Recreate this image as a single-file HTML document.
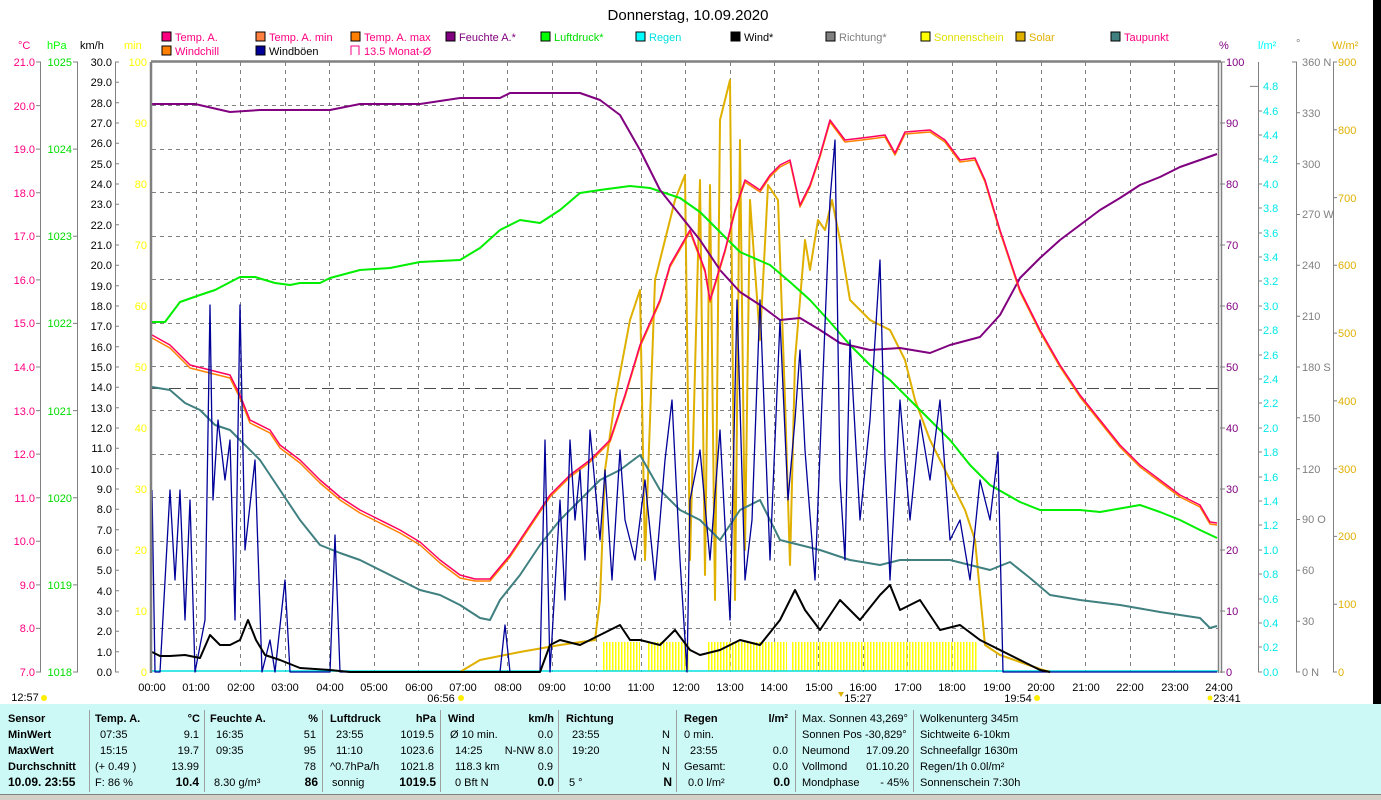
<!DOCTYPE html>
<html><head><meta charset="utf-8"><style>
body{margin:0;background:#fff;width:1381px;height:800px;overflow:hidden}
svg{display:block;font-family:"Liberation Sans",sans-serif}
</style></head><body>
<svg width="1381" height="800" viewBox="0 0 1381 800" xmlns="http://www.w3.org/2000/svg">
<defs>
<pattern id="sun" x="0" y="0" width="3" height="40" patternUnits="userSpaceOnUse"><rect x="0" y="0" width="1.5" height="40" fill="#ffff00"/></pattern>
</defs>
<rect x="1373" y="0" width="8" height="704" fill="#000"/>
<text x="688" y="20" font-size="15" text-anchor="middle">Donnerstag, 10.09.2020</text>
<!-- legend -->
<g font-size="11">
<rect x="162" y="32" width="9" height="9" fill="#ff0080" stroke="#000"/><text x="175" y="41" fill="#ff0080">Temp. A.</text>
<rect x="256" y="32" width="9" height="9" fill="#ff8040" stroke="#000"/><text x="269" y="41" fill="#ff0080">Temp. A. min</text>
<rect x="351" y="32" width="9" height="9" fill="#ff8000" stroke="#000"/><text x="364" y="41" fill="#ff0080">Temp. A. max</text>
<rect x="446" y="32" width="9" height="9" fill="#800080" stroke="#000"/><text x="459" y="41" fill="#800080">Feuchte A.*</text>
<rect x="541" y="32" width="9" height="9" fill="#00ff00" stroke="#000"/><text x="554" y="41" fill="#00dd00">Luftdruck*</text>
<rect x="636" y="32" width="9" height="9" fill="#00ffff" stroke="#000"/><text x="649" y="41" fill="#00e0e0">Regen</text>
<rect x="731" y="32" width="9" height="9" fill="#000" stroke="#000"/><text x="744" y="41">Wind*</text>
<rect x="826" y="32" width="9" height="9" fill="#808080" stroke="#000"/><text x="839" y="41" fill="#808080">Richtung*</text>
<rect x="921" y="32" width="9" height="9" fill="#ffff00" stroke="#000"/><text x="934" y="41" fill="#e0e000">Sonnenschein</text>
<rect x="1016" y="32" width="9" height="9" fill="#e0b000" stroke="#000"/><text x="1029" y="41" fill="#e0b000">Solar</text>
<rect x="1111" y="32" width="9" height="9" fill="#408080" stroke="#000"/><text x="1124" y="41" fill="#ff0080">Taupunkt</text>
<rect x="162" y="46" width="9" height="9" fill="#ff8000" stroke="#000"/><text x="175" y="55" fill="#ff0080">Windchill</text>
<rect x="256" y="46" width="9" height="9" fill="#000099" stroke="#000"/><text x="269" y="55">Windböen</text>
<path d="M351 55V46h8v9" fill="none" stroke="#ff0080"/><text x="364" y="55" fill="#ff0080">13.5 Monat-Ø</text>
</g>
<!-- axis units -->
<g font-size="11">
<text x="18" y="49" fill="#ff0080">°C</text><text x="47" y="49" fill="#00ff00">hPa</text><text x="80" y="49">km/h</text><text x="124" y="49" fill="#ffff00">min</text>
<text x="1219" y="49" fill="#800080">%</text><text x="1258" y="49" fill="#00ffff">l/m²</text><text x="1296" y="47" fill="#808080">°</text><text x="1332" y="49" fill="#e0b000">W/m²</text>
</g>
<!-- axis lines -->
<g stroke="#808080" stroke-width="1" fill="none">
<path d="M40.5 62V672M77.5 62V672M115.5 62V672M1258.5 62V672M1296.5 62V672M1333.5 62V672"/>
<path d="M36 62h5M36 105.6h5M36 149.1h5M36 192.7h5M36 236.3h5M36 279.9h5M36 323.4h5M36 367h5M36 410.6h5M36 454.1h5M36 497.7h5M36 541.3h5M36 584.9h5M36 628.4h5M36 672h5"/>
<path d="M73 62h5M73 149.1h5M73 236.3h5M73 323.4h5M73 410.6h5M73 497.7h5M73 584.9h5M73 672h5"/>
<path d="M115 62h4M115 82.3h4M115 102.7h4M115 123h4M115 143.3h4M115 163.7h4M115 184h4M115 204.3h4M115 224.7h4M115 245h4M115 265.3h4M115 285.7h4M115 306h4M115 326.3h4M115 346.7h4M115 367h4M115 387.3h4M115 407.7h4M115 428h4M115 448.3h4M115 468.7h4M115 489h4M115 509.3h4M115 529.7h4M115 550h4M115 570.3h4M115 590.7h4M115 611h4M115 631.3h4M115 651.7h4M115 672h4"/>
<path d="M1220 62h5M1220 123h5M1220 184h5M1220 245h5M1220 306h5M1220 367h5M1220 428h5M1220 489h5M1220 550h5M1220 611h5M1220 672h5"/>
<path d="M1250 86.4h8M1258 111h4M1258 135h4M1258 159h4M1258 184h4M1258 208h4M1258 233h4M1258 257h4M1258 281h4M1258 306h4M1258 330h4M1258 355h4M1258 379h4M1258 403h4M1258 428h4M1258 452h4M1258 477h4M1258 501h4M1258 525h4M1258 550h4M1258 574h4M1258 599h4M1258 623h4M1258 647h4M1258 672h4"/>
<path d="M1292 62h5M1296 112.8h4M1296 163.7h4M1296 214.5h4M1296 265.3h4M1296 316.2h4M1296 367h4M1296 417.8h4M1296 468.7h4M1296 519.5h4M1296 570.3h4M1296 621.2h4M1296 672h4"/>
<path d="M1333 62h4M1333 129.8h4M1333 197.6h4M1333 265.3h4M1333 333.1h4M1333 400.9h4M1333 468.7h4M1333 536.4h4M1333 604.2h4M1333 672h4"/>
</g>
<!-- left labels -->
<g font-size="11" text-anchor="end" fill="#ff0080">
<text x="35" y="66">21.0</text><text x="35" y="110">20.0</text><text x="35" y="153">19.0</text><text x="35" y="197">18.0</text><text x="35" y="240">17.0</text><text x="35" y="284">16.0</text><text x="35" y="327">15.0</text><text x="35" y="371">14.0</text><text x="35" y="415">13.0</text><text x="35" y="458">12.0</text><text x="35" y="502">11.0</text><text x="35" y="545">10.0</text><text x="35" y="589">9.0</text><text x="35" y="632">8.0</text><text x="35" y="676">7.0</text>
</g>
<g font-size="11" text-anchor="end" fill="#00dd00">
<text x="72" y="66">1025</text><text x="72" y="153">1024</text><text x="72" y="240">1023</text><text x="72" y="327">1022</text><text x="72" y="415">1021</text><text x="72" y="502">1020</text><text x="72" y="589">1019</text><text x="72" y="676">1018</text>
</g>
<g font-size="11" text-anchor="end">
<text x="112" y="66">30.0</text><text x="112" y="86">29.0</text><text x="112" y="107">28.0</text><text x="112" y="127">27.0</text><text x="112" y="147">26.0</text><text x="112" y="168">25.0</text><text x="112" y="188">24.0</text><text x="112" y="208">23.0</text><text x="112" y="229">22.0</text><text x="112" y="249">21.0</text><text x="112" y="269">20.0</text><text x="112" y="290">19.0</text><text x="112" y="310">18.0</text><text x="112" y="330">17.0</text><text x="112" y="351">16.0</text><text x="112" y="371">15.0</text><text x="112" y="391">14.0</text><text x="112" y="412">13.0</text><text x="112" y="432">12.0</text><text x="112" y="452">11.0</text><text x="112" y="473">10.0</text><text x="112" y="493">9.0</text><text x="112" y="513">8.0</text><text x="112" y="534">7.0</text><text x="112" y="554">6.0</text><text x="112" y="574">5.0</text><text x="112" y="595">4.0</text><text x="112" y="615">3.0</text><text x="112" y="635">2.0</text><text x="112" y="656">1.0</text><text x="112" y="676">0.0</text>
</g>
<g font-size="11" text-anchor="end" fill="#ffff00">
<text x="147" y="66">100</text><text x="147" y="127">90</text><text x="147" y="188">80</text><text x="147" y="249">70</text><text x="147" y="310">60</text><text x="147" y="371">50</text><text x="147" y="432">40</text><text x="147" y="493">30</text><text x="147" y="554">20</text><text x="147" y="615">10</text><text x="147" y="676">0</text>
</g>
<!-- right labels -->
<g font-size="11" fill="#800080">
<text x="1226" y="66">100</text><text x="1226" y="127">90</text><text x="1226" y="188">80</text><text x="1226" y="249">70</text><text x="1226" y="310">60</text><text x="1226" y="371">50</text><text x="1226" y="432">40</text><text x="1226" y="493">30</text><text x="1226" y="554">20</text><text x="1226" y="615">10</text><text x="1226" y="676">0</text>
</g>
<g font-size="11" fill="#00e8e8">
<text x="1263" y="90">4.8</text><text x="1263" y="115">4.6</text><text x="1263" y="139">4.4</text><text x="1263" y="163">4.2</text><text x="1263" y="188">4.0</text><text x="1263" y="212">3.8</text><text x="1263" y="237">3.6</text><text x="1263" y="261">3.4</text><text x="1263" y="285">3.2</text><text x="1263" y="310">3.0</text><text x="1263" y="334">2.8</text><text x="1263" y="359">2.6</text><text x="1263" y="383">2.4</text><text x="1263" y="407">2.2</text><text x="1263" y="432">2.0</text><text x="1263" y="456">1.8</text><text x="1263" y="481">1.6</text><text x="1263" y="505">1.4</text><text x="1263" y="529">1.2</text><text x="1263" y="554">1.0</text><text x="1263" y="578">0.8</text><text x="1263" y="603">0.6</text><text x="1263" y="627">0.4</text><text x="1263" y="651">0.2</text><text x="1263" y="676">0.0</text>
</g>
<g font-size="11" fill="#808080">
<text x="1302" y="66">360 N</text><text x="1302" y="117">330</text><text x="1302" y="168">300</text><text x="1302" y="218">270 W</text><text x="1302" y="269">240</text><text x="1302" y="320">210</text><text x="1302" y="371">180 S</text><text x="1302" y="422">150</text><text x="1302" y="473">120</text><text x="1302" y="523">90 O</text><text x="1302" y="574">60</text><text x="1302" y="625">30</text><text x="1302" y="676">0 N</text>
</g>
<g font-size="11" fill="#e0b000">
<text x="1338" y="66">900</text><text x="1338" y="134">800</text><text x="1338" y="202">700</text><text x="1338" y="269">600</text><text x="1338" y="337">500</text><text x="1338" y="405">400</text><text x="1338" y="473">300</text><text x="1338" y="540">200</text><text x="1338" y="608">100</text><text x="1338" y="676">0</text>
</g>
<!-- grid -->
<g stroke="#808080" stroke-dasharray="4,4" stroke-width="1">
<path d="M152 105.5H1218M152 149.5H1218M152 192.5H1218M152 236.5H1218M152 279.5H1218M152 323.5H1218M152 366.5H1218M152 410.5H1218M152 454.5H1218M152 497.5H1218M152 541.5H1218M152 584.5H1218M152 628.5H1218"/>
<path d="M196.5 62V672M240.5 62V672M285.5 62V672M329.5 62V672M374.5 62V672M418.5 62V672M463.5 62V672M507.5 62V672M552.5 62V672M596.5 62V672M641.5 62V672M685.5 62V672M730.5 62V672M774.5 62V672M818.5 62V672M863.5 62V672M907.5 62V672M952.5 62V672M996.5 62V672M1041.5 62V672M1085.5 62V672M1130.5 62V672M1174.5 62V672"/>
</g>
<path d="M152 388.5H1218" stroke="#000" stroke-dasharray="12,5" stroke-width="1" opacity=".7"/>
<!-- sunshine -->
<g fill="url(#sun)"><rect x="603" y="642" width="37" height="29"/><rect x="648" y="642" width="42" height="29"/><rect x="708" y="642" width="79" height="29"/><rect x="792" y="642" width="186" height="29"/></g>
<path d="M152 671H1218" stroke="#00e0e0" stroke-width="1.5"/>
<g fill="none" stroke-width="2" stroke-linejoin="round">
<polyline stroke="#e0b000" points="460,672 480,660 520,652 560,645 595,640 600,600 605,470 615,400 630,320 640,290 645,560 655,280 665,240 675,200 685,175 690,560 700,180 705,575 710,185 715,600 720,120 730,80 735,600 740,140 745,550 750,200 760,340 768,185 778,200 785,400 790,565 795,360 805,240 810,270 818,220 825,230 832,200 840,240 850,300 870,320 890,330 905,360 915,400 930,440 950,480 965,510 975,540 985,645 1000,655 1020,662 1040,669 1050,672"/>
<polyline stroke="#408080" points="152,387 170,390 185,403 200,410 215,425 230,430 240,440 260,460 280,490 300,520 320,545 340,553 360,560 380,570 400,580 420,590 440,595 460,605 480,618 490,620 500,600 520,575 540,545 560,520 580,500 600,480 620,470 640,455 660,490 680,510 700,520 720,540 740,510 760,500 780,540 800,545 820,550 850,560 880,565 900,560 930,560 950,560 970,565 990,570 1010,562 1030,578 1050,595 1080,600 1120,605 1160,612 1200,618 1210,628 1217,626"/>
<polyline stroke="#00ee00" points="152,322 165,322 180,302 200,295 215,290 240,277 255,277 275,283 290,285 300,283 320,283 330,278 360,270 390,268 420,262 460,260 480,248 500,230 520,220 540,223 560,210 580,193 600,190 630,186 650,188 680,198 700,212 720,232 740,252 770,265 790,282 810,300 830,322 850,345 870,365 890,380 910,400 930,420 950,440 970,465 990,485 1020,502 1040,510 1080,510 1100,512 1140,505 1160,512 1180,520 1200,530 1217,538"/>
<polyline stroke="#800080" points="152,104 195,104 230,112 260,110 330,110 360,104 420,104 460,98 500,98 510,93 580,93 600,100 620,115 640,150 660,190 680,215 700,240 720,270 740,292 760,305 780,320 800,318 820,330 840,343 870,350 900,348 930,353 950,345 980,337 1000,315 1020,278 1040,258 1060,240 1080,225 1100,210 1120,198 1140,185 1160,177 1180,167 1200,160 1217,154"/>
<polyline stroke="#ff8000" stroke-width="1.5" points="152,338 170,348 190,368 210,373 230,378 240,398 250,423 270,433 280,448 300,463 320,483 340,500 360,513 380,523 400,533 420,545 440,563 460,578 475,581 490,581 510,557 530,527 550,497 570,477 590,462 610,442 625,397 640,347 660,302 670,267 690,232 705,272 710,302 725,252 735,212 745,182 760,192 770,177 780,167 790,162 800,207 810,187 820,157 830,122 845,142 870,139 885,137 895,155 905,134 930,132 945,142 960,162 975,160 985,182 1000,232 1020,292 1040,332 1060,367 1080,397 1100,422 1120,447 1140,467 1160,482 1180,497 1200,507 1210,524 1217,525"/>
<polyline stroke="#ff0060" stroke-width="1.5" points="152,335 170,345 190,365 210,370 230,375 240,395 250,420 270,430 280,445 300,460 320,480 340,497 360,510 380,520 400,530 420,542 440,560 460,575 475,579 490,579 510,555 530,525 550,495 570,475 590,460 610,440 625,395 640,345 660,300 670,265 690,230 705,270 710,300 725,250 735,210 745,180 760,190 770,175 780,165 790,160 800,205 810,185 820,155 830,120 845,140 870,137 885,135 895,153 905,132 930,130 945,140 960,160 975,158 985,180 1000,230 1020,290 1040,330 1060,365 1080,395 1100,420 1120,445 1140,465 1160,480 1180,495 1200,505 1210,522 1217,523"/>
<polyline stroke="#000099" stroke-width="1.3" points="152,490 155,672 160,672 170,490 175,580 180,490 185,620 190,500 195,672 205,620 210,305 213,500 218,420 225,480 230,440 235,620 240,305 245,550 255,460 262,672 270,640 275,672 285,580 290,672 330,672 335,535 340,672 500,672 505,625 510,672 540,672 545,440 550,672 560,500 565,600 570,440 575,520 580,470 585,560 590,430 600,540 605,470 612,580 620,450 625,520 635,560 645,480 655,580 665,460 672,400 680,560 687,672 690,500 700,450 710,560 720,430 730,620 737,300 745,580 752,520 760,300 770,560 780,320 788,500 795,420 800,350 805,450 815,580 822,400 830,200 835,140 840,480 845,560 850,340 860,520 870,420 880,260 885,460 890,580 900,400 910,520 920,420 930,480 940,400 950,540 960,520 970,580 980,480 990,520 998,452 1003,672 1217,672"/>
<polyline stroke="#000" points="152,652 160,656 170,656 185,655 200,658 210,635 220,645 230,645 240,640 248,620 256,640 265,655 280,660 300,668 330,670 350,672 540,672 550,645 560,640 580,645 600,635 620,625 630,640 640,640 660,645 675,630 690,650 700,655 720,650 740,640 760,645 780,620 795,590 805,610 820,630 840,600 860,620 880,595 890,585 900,610 920,600 940,630 960,625 980,640 1000,650 1020,660 1040,670 1050,672"/>
</g>
<!-- frame -->
<path d="M151 61.5H1221M151 62V673" stroke="#808080" stroke-width="2.5" fill="none"/>
<path d="M1218.5 62V673M1221.5 62V673" stroke="#808080" stroke-width="1.5" fill="none"/>
<!-- x labels -->
<g font-size="11" text-anchor="middle">
<text x="152" y="691">00:00</text><text x="196" y="691">01:00</text><text x="241" y="691">02:00</text><text x="285" y="691">03:00</text><text x="330" y="691">04:00</text><text x="374" y="691">05:00</text><text x="419" y="691">06:00</text><text x="463" y="691">07:00</text><text x="508" y="691">08:00</text><text x="552" y="691">09:00</text><text x="597" y="691">10:00</text><text x="641" y="691">11:00</text><text x="686" y="691">12:00</text><text x="730" y="691">13:00</text><text x="774" y="691">14:00</text><text x="819" y="691">15:00</text><text x="863" y="691">16:00</text><text x="908" y="691">17:00</text><text x="952" y="691">18:00</text><text x="997" y="691">19:00</text><text x="1041" y="691">20:00</text><text x="1086" y="691">21:00</text><text x="1130" y="691">22:00</text><text x="1175" y="691">23:00</text><text x="1219" y="691">24:00</text>
<text x="25" y="701">12:57</text><text x="441" y="702">06:56</text><text x="858" y="702">15:27</text><text x="1018" y="702">19:54</text><text x="1227" y="702">23:41</text>
</g>
<g fill="#ffee00"><circle cx="44" cy="698" r="3"/><circle cx="461" cy="698" r="3"/><circle cx="1037" cy="698" r="3"/><circle cx="1210" cy="698" r="2.5"/></g>
<path d="M838 692l3 5 3-5z" fill="#e0b000"/>
<!-- bottom table -->
<rect x="0" y="704" width="1381" height="90" fill="#ccf8f6"/>
<rect x="0" y="794" width="1381" height="6" fill="#d4d0c8"/>
<path d="M0 794.5H1381" stroke="#808080"/>
<g stroke="#a0a0a0"><path d="M89.5 710V792M204.5 710V792M322.5 710V792M440.5 710V792M558.5 710V792M676.5 710V792M795.5 710V792M913.5 710V792"/></g>
<g font-size="11">
<g font-weight="bold"><text x="8" y="722">Sensor</text><text x="8" y="738">MinWert</text><text x="8" y="754">MaxWert</text><text x="8" y="770">Durchschnitt</text><text x="8" y="786" font-size="12">10.09. 23:55</text>
<text x="95" y="722">Temp. A.</text><text x="200" y="722" text-anchor="end">°C</text>
<text x="210" y="722">Feuchte A.</text><text x="318" y="722" text-anchor="end">%</text>
<text x="330" y="722">Luftdruck</text><text x="436" y="722" text-anchor="end">hPa</text>
<text x="448" y="722">Wind</text><text x="554" y="722" text-anchor="end">km/h</text>
<text x="566" y="722">Richtung</text>
<text x="684" y="722">Regen</text><text x="788" y="722" text-anchor="end">l/m²</text>
<text x="199" y="786" text-anchor="end" font-size="12">10.4</text><text x="318" y="786" text-anchor="end" font-size="12">86</text><text x="436" y="786" text-anchor="end" font-size="12">1019.5</text><text x="554" y="786" text-anchor="end" font-size="12">0.0</text><text x="672" y="786" text-anchor="end" font-size="12">N</text><text x="790" y="786" text-anchor="end" font-size="12">0.0</text>
</g>
<text x="100" y="738">07:35</text><text x="199" y="738" text-anchor="end">9.1</text>
<text x="100" y="754">15:15</text><text x="199" y="754" text-anchor="end">19.7</text>
<text x="95" y="770">(+ 0.49 )</text><text x="199" y="770" text-anchor="end">13.99</text>
<text x="95" y="786">F: 86 %</text>
<text x="216" y="738">16:35</text><text x="316" y="738" text-anchor="end">51</text>
<text x="216" y="754">09:35</text><text x="316" y="754" text-anchor="end">95</text>
<text x="316" y="770" text-anchor="end">78</text>
<text x="214" y="786">8.30 g/m³</text>
<text x="336" y="738">23:55</text><text x="434" y="738" text-anchor="end">1019.5</text>
<text x="336" y="754">11:10</text><text x="434" y="754" text-anchor="end">1023.6</text>
<text x="330" y="770">^0.7hPa/h</text><text x="434" y="770" text-anchor="end">1021.8</text>
<text x="332" y="786">sonnig</text>
<text x="450" y="738">Ø 10 min.</text><text x="553" y="738" text-anchor="end">0.0</text>
<text x="455" y="754">14:25</text><text x="553" y="754" text-anchor="end">N-NW 8.0</text>
<text x="455" y="770">118.3 km</text><text x="553" y="770" text-anchor="end">0.9</text>
<text x="455" y="786">0 Bft N</text>
<text x="572" y="738">23:55</text><text x="670" y="738" text-anchor="end">N</text>
<text x="572" y="754">19:20</text><text x="670" y="754" text-anchor="end">N</text>
<text x="670" y="770" text-anchor="end">N</text>
<text x="569" y="786">5 °</text>
<text x="684" y="738">0 min.</text>
<text x="690" y="754">23:55</text><text x="788" y="754" text-anchor="end">0.0</text>
<text x="684" y="770">Gesamt:</text><text x="788" y="770" text-anchor="end">0.0</text>
<text x="688" y="786">0.0 l/m²</text>
<text x="802" y="722">Max. Sonnen 43,269°</text>
<text x="802" y="738">Sonnen Pos  -30,829°</text>
<text x="802" y="754">Neumond</text><text x="909" y="754" text-anchor="end">17.09.20</text>
<text x="802" y="770">Vollmond</text><text x="909" y="770" text-anchor="end">01.10.20</text>
<text x="802" y="786">Mondphase</text><text x="909" y="786" text-anchor="end">- 45%</text>
<text x="920" y="722">Wolkenunterg   345m</text>
<text x="920" y="738">Sichtweite     6-10km</text>
<text x="920" y="754">Schneefallgr   1630m</text>
<text x="920" y="770">Regen/1h      0.0l/m²</text>
<text x="920" y="786">Sonnenschein  7:30h</text>
</g>
</svg>
</body></html>
